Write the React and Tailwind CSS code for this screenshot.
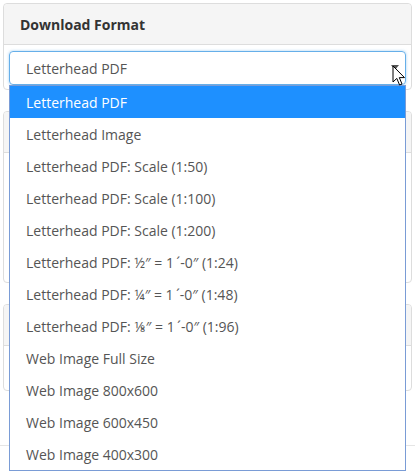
import React from "react";

const items = [
  "Letterhead PDF",
  "Letterhead Image",
  "Letterhead PDF: Scale (1:50)",
  "Letterhead PDF: Scale (1:100)",
  "Letterhead PDF: Scale (1:200)",
  "Letterhead PDF: ½″ = 1\u2009´-0″ (1:24)",
  "Letterhead PDF: ¼″ = 1\u2009´-0″ (1:48)",
  "Letterhead PDF: ⅛″ = 1\u2009´-0″ (1:96)",
  "Web Image Full Size",
  "Web Image 800x600",
  "Web Image 600x450",
  "Web Image 400x300",
];

function Card({ title, bodyH }) {
  return (
    <div className="border border-[#dddddd] rounded-[4px] bg-white overflow-hidden">
      <div className="h-[41px] bg-[#f5f5f5] border-b border-[#dddddd] px-[16px] flex items-center text-[14px] font-bold text-[#333333]">
        {title}
      </div>
      <div style={{ height: bodyH }} />
    </div>
  );
}

export default function App() {
  return (
    <div
      className="relative w-[415px] h-[472px] bg-white overflow-hidden"
      style={{ fontFamily: '"Open Sans", "Liberation Sans", sans-serif' }}
    >
      <div className="px-[3px] pt-[3px] flex flex-col gap-[21px]">
        <div className="border border-[#dddddd] rounded-[4px] bg-white">
          <div className="h-[41px] bg-[#f5f5f5] border-b border-[#dddddd] rounded-t-[4px] px-[16px] flex items-center text-[14px] font-bold text-[#333333]">
            Download Format
          </div>
          <div className="px-[5px] pt-[6px] pb-[4px]">
            <div className="relative h-[34px] border border-[#66afe9] rounded-[4px] shadow-[0_0_3px_rgba(102,175,233,0.6)] flex items-center pl-[16px] text-[14px] text-[#555555]">
              Letterhead PDF
              <span className="absolute right-[6px] top-[13px] w-0 h-0 border-l-[4px] border-r-[4px] border-t-[5px] border-l-transparent border-r-transparent border-t-[#555555]" />
            </div>
          </div>
        </div>
        <Card title="" bodyH={129} />
        <Card title="" bodyH={44} />
        <div className="-mx-[3px] mt-[33px] border-t border-[#e5e5e5]" />
      </div>

      <div className="absolute left-[9px] top-[85px] w-[397px] border border-[#7a9cd6] bg-white">
        {items.map((t, i) => (
          <div
            key={i}
            className={
              "h-[32px] flex items-center pl-[16px] text-[14px] whitespace-nowrap " +
              (i === 0 ? "bg-[#1e90ff] text-white" : "text-[#555555]")
            }
          >
            {t}
          </div>
        ))}
      </div>

      <svg
        className="absolute left-[392px] top-[65px]"
        width="14"
        height="22"
        viewBox="0 0 14 22"
      >
        <path
          d="M1 1 L1 17 L4.8 13.4 L7.6 20 L10 19 L7.3 12.6 L12.5 12.6 Z"
          fill="#ffffff"
          stroke="#000000"
          strokeWidth="1"
          strokeLinejoin="miter"
        />
      </svg>
    </div>
  );
}
